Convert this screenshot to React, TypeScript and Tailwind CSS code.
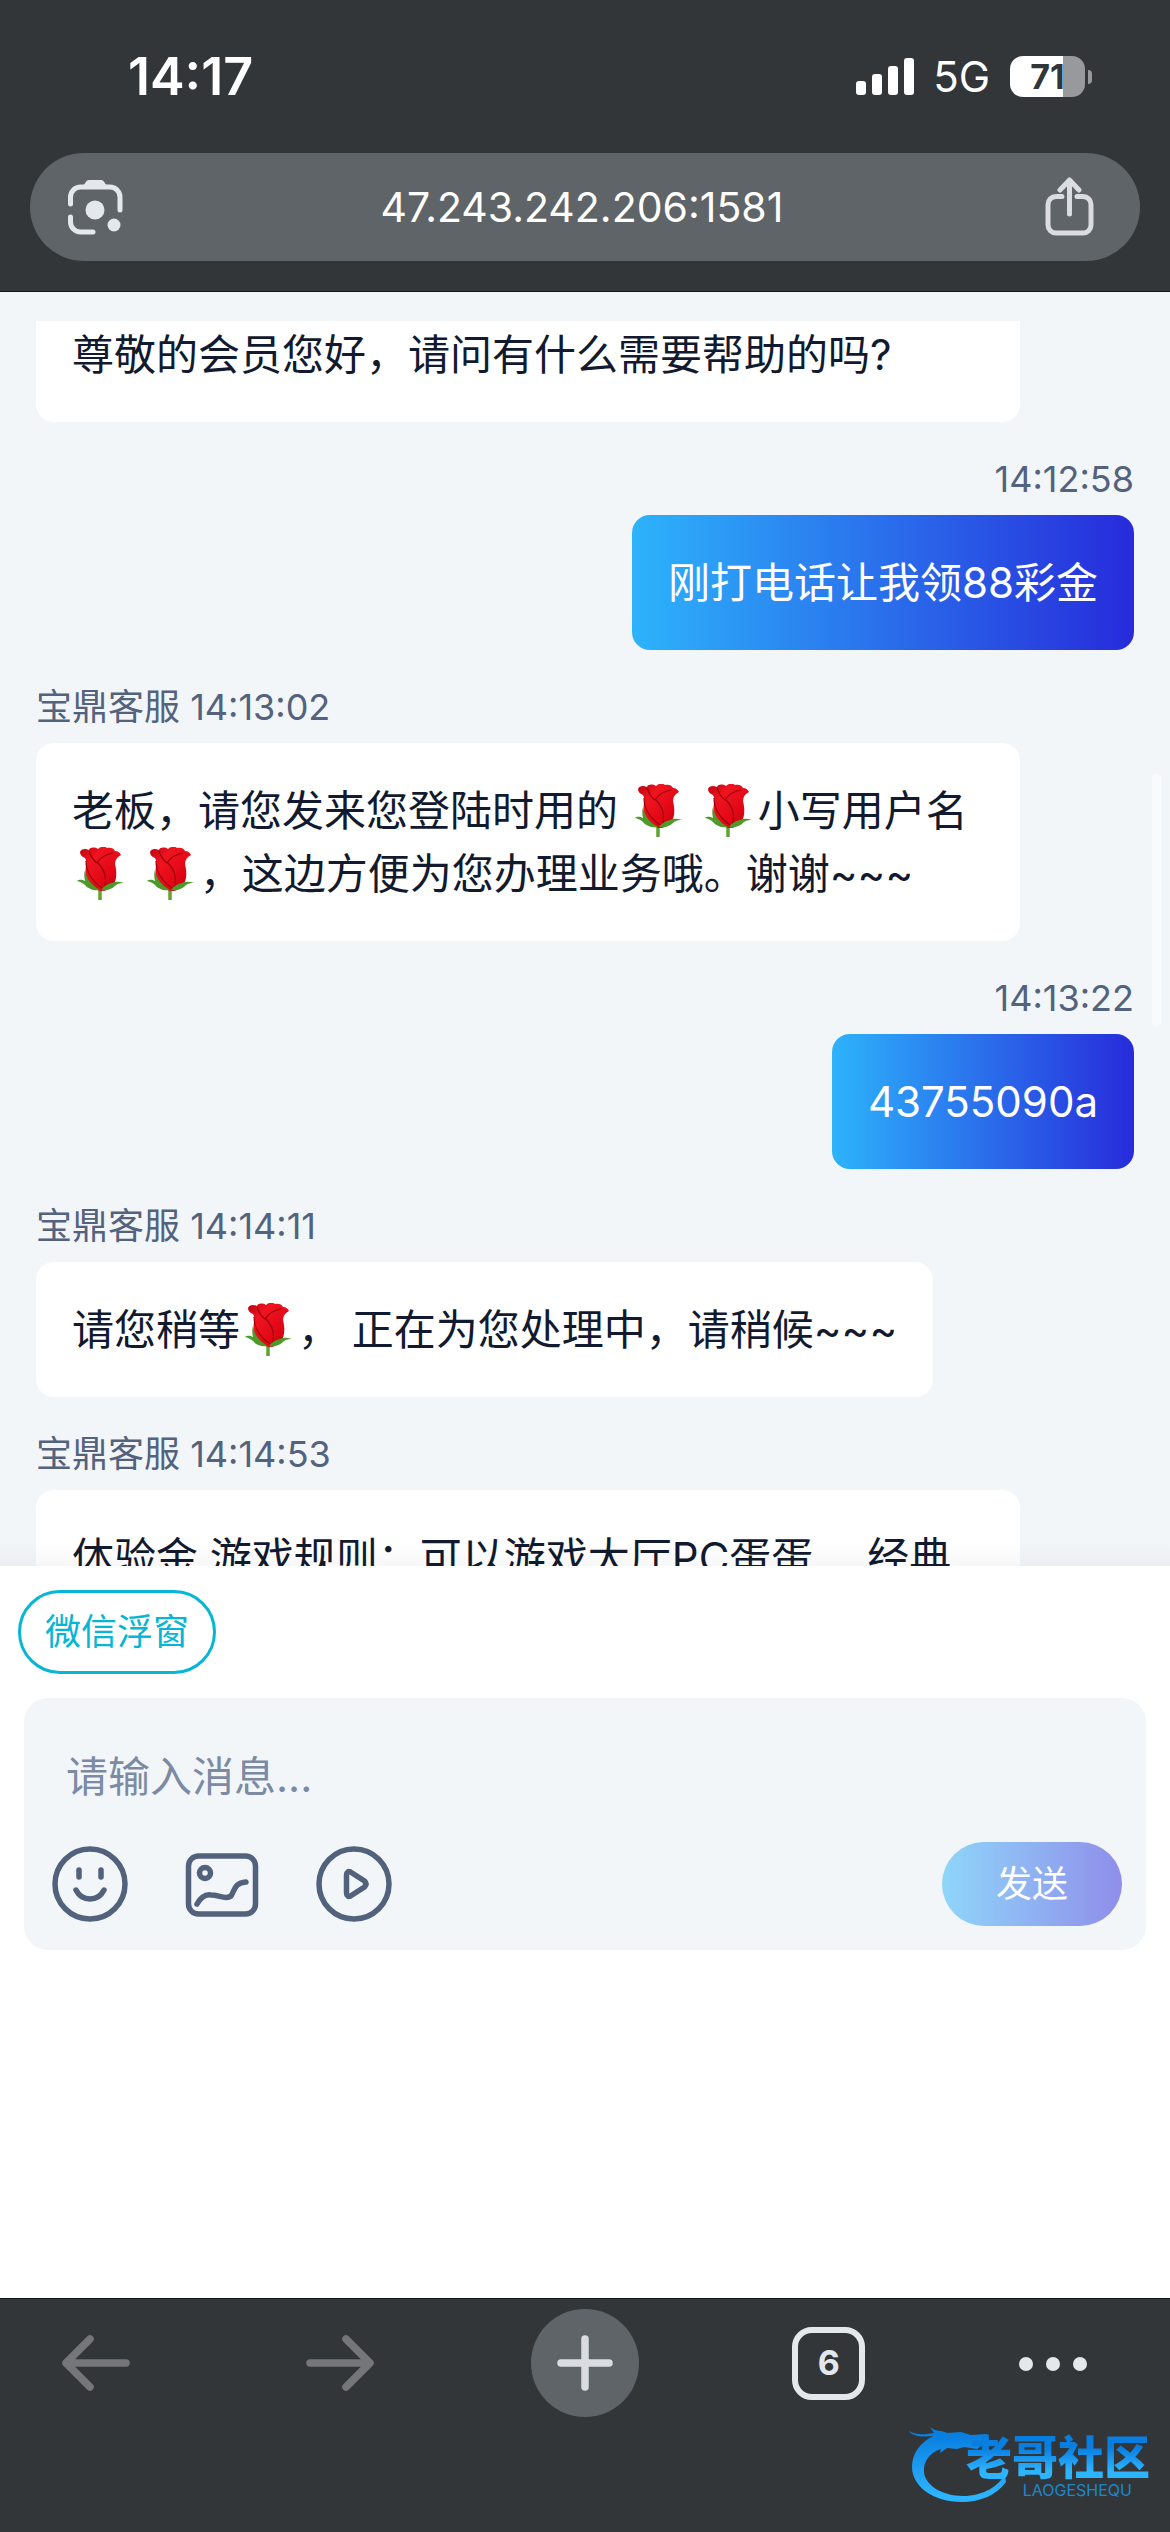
import { ReactNode } from "react"

type Message = {
  from: "agent" | "member"
  time: string
  body: ReactNode
  wide?: boolean
}

const AGENT_NAME = "宝鼎客服"

const messages: Message[] = [
  { from: "member", time: "14:12:58", body: "刚打电话让我领88彩金" },
  {
    from: "agent",
    time: "14:13:02",
    body: (
      <>
        老板，请您发来您登陆时用的 <Rose /> <Rose />
        小写用户名
        <Rose /> <Rose />
        ，这边方便为您办理业务哦。谢谢~~~
      </>
    ),
  },
  { from: "member", time: "14:13:22", body: "43755090a" },
  {
    from: "agent",
    time: "14:14:11",
    body: (
      <>
        请您稍等
        <Rose />
        ， 正在为您处理中，请稍候~~~
      </>
    ),
  },
  {
    from: "agent",
    time: "14:14:53",
    body: "体验金 游戏规则：可以游戏大厅PC蛋蛋　 经典",
    wide: true,
  },
]

export default function App() {
  return (
    <div className="relative flex h-screen flex-col overflow-hidden bg-white font-['Inter','Noto_Sans_CJK_SC',sans-serif]">
      <header className="border-b border-[#16181a] bg-[#333639]">
        <StatusBar />
        <AddressBar />
      </header>
      <Chat />
      <Composer />
      <BottomNav />
      <Watermark />
    </div>
  )
}

function StatusBar() {
  return (
    <div className="flex h-[153px] items-center justify-between pr-[78px] pl-[128px] text-white">
      <span className="text-[52px] leading-[60px] font-semibold">14:17</span>
      <div className="flex items-center gap-[20px]">
        <div className="flex items-center gap-[18px]">
          <svg width="60" height="40" viewBox="0 0 60 40" fill="currentColor">
            <rect x="1" y="24" width="10" height="14" rx="3" />
            <rect x="17" y="17" width="10" height="21" rx="3" />
            <rect x="33" y="9" width="10" height="29" rx="3" />
            <rect x="49" y="1" width="10" height="37" rx="3" />
          </svg>
          <span className="text-[42px] leading-[60px]">5G</span>
        </div>
        <div className="flex items-center gap-[3px]">
          <div className="h-[41px] w-[75px] rounded-[13px] bg-linear-to-r from-white from-71% to-[#98999b] to-71% text-center text-[34px] leading-[41px] font-bold text-[#333639]">
            71
          </div>
          <div className="h-[14px] w-[4px] rounded-r-full bg-[#98999b]" />
        </div>
      </div>
    </div>
  )
}

function AddressBar() {
  return (
    <div className="mx-[30px] mb-[30px] flex h-[108px] items-center justify-between rounded-full bg-[#5f6468] px-[36px] text-[#e4e8ec]">
      <button aria-label="Lens">
        <svg
          width="60"
          height="60"
          viewBox="0 0 60 60"
          fill="none"
          stroke="currentColor"
          strokeWidth="5"
          strokeLinecap="round"
        >
          <path d="M4.500 27V20a10 10 0 0 1 10-10H44a10 10 0 0 1 10 10v13" />
          <path d="M4.500 40v5a10 10 0 0 0 10 10H27" />
          <path
            d="M15 10c4-1 4-7 8-7h12c4 0 4 6 8 7z"
            fill="currentColor"
            stroke="none"
          />
          <circle cx="29" cy="33" r="9.500" fill="currentColor" stroke="none" />
          <circle cx="48" cy="48" r="6.500" fill="currentColor" stroke="none" />
        </svg>
      </button>
      <span className="text-[41px] leading-[60px] text-white">
        47.243.242.206:1581
      </span>
      <button aria-label="Share">
        <svg
          width="66"
          height="60"
          viewBox="0 0 66 60"
          fill="none"
          stroke="#dadce2"
          strokeWidth="5"
          strokeLinecap="round"
          strokeLinejoin="round"
        >
          <path d="M24 19.500H18a8 8 0 0 0-8 8V48a8 8 0 0 0 8 8H45a8 8 0 0 0 8-8V27.500a8 8 0 0 0-8-8H39" />
          <path d="M31.500 37V4M22 13l9.500-10 9.500 10" />
        </svg>
      </button>
    </div>
  )
}

function Chat() {
  return (
    <main className="relative min-h-0 flex-1 bg-[#f2f6f9] pt-[29px]">
      <div className="h-full overflow-hidden px-[36px]">
        {/* scrolled past the top edge */}
        <div className="-mt-[34px]">
          <div className="w-[984px] max-w-full rounded-[18px] bg-white p-[36px] text-[42px] leading-[63px] text-[#111a2e]">
            尊敬的会员您好，请问有什么需要帮助的吗?
          </div>
        </div>
        {messages.map((message) => (
          <ChatMessage key={message.time} {...message} />
        ))}
      </div>
      <div className="absolute top-[482px] right-[9px] h-[253px] w-[9px] rounded-full bg-[#f9fafc]" />
      <div className="absolute inset-x-0 bottom-0 h-[24px] bg-linear-to-b from-transparent to-black/3" />
    </main>
  )
}

function ChatMessage({ from, time, body, wide }: Message) {
  const mine = from === "member"

  return (
    <div
      className={`flex flex-col pt-[30px] ${mine ? "items-end" : "items-start"}`}
    >
      <p className="mb-[9px] text-[36px] leading-[54px] text-[#53627d]">
        {mine ? time : `${AGENT_NAME} ${time}`}
      </p>
      <div
        className={`max-w-[984px] rounded-[18px] p-[36px] text-[42px] leading-[63px] ${
          mine
            ? "bg-linear-to-r/srgb from-[#2db3fb] to-[#272bdb] text-white"
            : "bg-white text-[#111a2e]"
        } ${wide ? "w-full" : ""}`}
      >
        {body}
      </div>
    </div>
  )
}

function Rose() {
  return (
    <svg
      role="img"
      aria-label="玫瑰"
      className="-my-[6px] inline-block align-[-6px]"
      width="58"
      height="54"
      viewBox="0 0 58 54"
    >
      <defs>
        <linearGradient id="petal" x1="0" y1="0" x2="1" y2="1">
          <stop offset="0" stopColor="#b80410" />
          <stop offset="0.3" stopColor="#f01420" />
          <stop offset="0.7" stopColor="#e00615" />
          <stop offset="1" stopColor="#a8000c" />
        </linearGradient>
      </defs>
      <path d="M28 42v11" stroke="#5fa52c" strokeWidth="3.500" />
      <path
        d="M8 5c1-3 5-4 9-2 1-3 6-3 9-1 3-3 7-3 9-1 3-1 7 0 8 3 3 0 5 2 6 4-4 2-6 5-6 9 2 8 2 16-2 21-3 4-7 6-11 6-6 0-14-6-16-13-2-8 2-15-1-20-3-1-5-3-5-6z"
        fill="url(#petal)"
      />
      <path
        d="M17 4c2 6 4 9 8 12 4-6 9-9 16-10M26 16c7 7 9 17 6 27M14 14c0 10 6 20 16 27"
        fill="none"
        stroke="#980009"
        strokeWidth="1.200"
      />
      <path
        d="M13 23c1 8 6 15 15 20-6 1-12-1-15-5-2-2-4-3-8-4 3-2 5-1 8 0-1-4-1-8 0-11zM29 43c3-4 6-6 11-7 4-2 8-1 12 0-5 0-7 1-9 3-3 3-8 5-14 4z"
        fill="#4d9a2b"
      />
    </svg>
  )
}

function Composer() {
  return (
    <section className="bg-white px-[24px] pt-[24px] pb-[348px]">
      <button className="-ml-[6px] block h-[84px] rounded-full border-3 border-[#06b6d4] px-[24px] text-[36px] leading-[54px] text-[#06b6d4]">
        微信浮窗
      </button>
      <form className="mt-[24px] rounded-[24px] bg-[#f2f6f9] p-[24px]">
        <input
          type="text"
          aria-label="请输入消息"
          placeholder="请输入消息..."
          className="block h-[108px] w-full px-[18px] text-[42px] text-[#111a2e] outline-none placeholder:text-[#7c8aa3]"
        />
        <div className="mt-[12px] flex items-center gap-[48px] text-[#52617c]">
          <button type="button" aria-label="表情">
            <ToolIcon>
              <circle cx="42" cy="42" r="35" />
              <path d="M31 28v7M53 28v7M28 48c6 12 22 12 28 0" />
            </ToolIcon>
          </button>
          <button type="button" aria-label="图片">
            <ToolIcon>
              <rect x="8.500" y="14" width="67" height="58" rx="10" />
              <circle cx="25" cy="31" r="5.500" />
              <path d="M17 62c4-7 8-10 14-9 8 0 15 5 20 1 4-6 3-13 15-14" />
            </ToolIcon>
          </button>
          <button type="button" aria-label="视频">
            <ToolIcon>
              <circle cx="42" cy="42" r="35" />
              <path d="M34.500 33v18c0 3 2 4 4 3l14-9c2-2 2-4 0-6l-14-9c-2-1-4 0-4 3z" />
            </ToolIcon>
          </button>
          <button
            type="submit"
            className="ml-auto h-[84px] w-[180px] rounded-full bg-linear-to-r/srgb from-[#8fd6fa] to-[#8f8eea] text-[36px] text-white"
          >
            发送
          </button>
        </div>
      </form>
    </section>
  )
}

function ToolIcon({ children }: { children: ReactNode }) {
  return (
    <svg
      width="84"
      height="84"
      viewBox="0 0 84 84"
      fill="none"
      stroke="currentColor"
      strokeWidth="5.500"
      strokeLinecap="round"
      strokeLinejoin="round"
    >
      {children}
    </svg>
  )
}

function BottomNav() {
  return (
    <nav className="flex h-[234px] items-start justify-between border-t border-[#16181a] bg-[#333639] pt-[10px] pr-[83px] pl-[42px]">
      <button aria-label="Back" className="size-[108px] text-[#757678]">
        <Arrow />
      </button>
      <button
        aria-label="Forward"
        className="size-[108px] rotate-180 text-[#757678]"
      >
        <Arrow />
      </button>
      <button
        aria-label="New tab"
        className="size-[108px] rounded-full bg-[#5f6468]"
      >
        <svg
          viewBox="0 0 108 108"
          fill="none"
          stroke="#dadce2"
          strokeWidth="7.500"
          strokeLinecap="round"
        >
          <path d="M54 30v48M30 54h48" />
        </svg>
      </button>
      <button
        aria-label="Tabs"
        className="grid size-[108px] place-items-center text-[#e4e8ec]"
      >
        <span className="grid size-[73px] place-items-center rounded-[20px] border-6 border-current text-[34px] leading-none font-bold">
          6
        </span>
      </button>
      <button aria-label="More" className="h-[108px] w-[68px]">
        <svg viewBox="0 0 68 108" fill="#e4e8ec">
          <circle cx="7" cy="55" r="7" />
          <circle cx="34" cy="55" r="7" />
          <circle cx="61" cy="55" r="7" />
        </svg>
      </button>
    </nav>
  )
}

function Arrow() {
  return (
    <svg
      viewBox="0 0 108 108"
      fill="none"
      stroke="currentColor"
      strokeWidth="7.500"
      strokeLinecap="round"
      strokeLinejoin="round"
    >
      <path d="M84 54H24M48 30L24 54l24 24" />
    </svg>
  )
}

function Watermark() {
  return (
    <div className="absolute right-[20px] bottom-[28px] h-[88px] w-[242px]">
      <svg
        className="absolute inset-0"
        width="104"
        height="88"
        viewBox="0 0 104 88"
      >
        <defs>
          <linearGradient id="dragon" x1="0" y1="0" x2="0" y2="1">
            <stop offset="0.100" stopColor="#087ee0" />
            <stop offset="0.900" stopColor="#2db4ff" />
          </linearGradient>
        </defs>
        <path
          d="M1 15c8 5 17 3 25 2l-4-6c6 5 11 3 17 6l14-1 10 3 16-1-1 6-10 1 8 3-7 5-13-2-7 2-10-1-7 5 1-4C22 36 15 46 16 56c1 13 18 24 39 24 20 0 37-10 42-23l1 9C89 79 72 86 54 86 25 86 4 70 4 51 4 37 13 26 25 20c-9 1-20 1-24-5z"
          fill="url(#dragon)"
        />
      </svg>
      <div className="absolute right-0 bottom-[4px] flex flex-col items-end">
        <span className="bg-linear-to-b from-[#087ee0] from-30% to-[#2db4ff] to-80% bg-clip-text text-[46px] leading-[46px] font-black text-transparent">
          老哥社区
        </span>
        <span className="pr-[18px] text-[16px] leading-[20px] text-[#1c86cc]">
          LAOGESHEQU
        </span>
      </div>
    </div>
  )
}
